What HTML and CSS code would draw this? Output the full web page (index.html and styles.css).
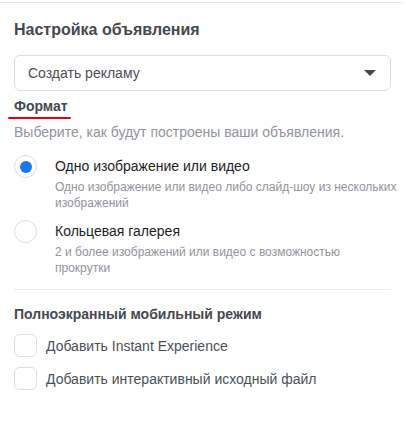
FILE: index.html
```html
<!DOCTYPE html>
<html lang="ru">
<head>
    <meta charset="UTF-8">
    <title>Настройка объявления</title>
    <link rel="stylesheet" href="styles.css">
</head>
<body>
    <div class="card">
        <h2 class="card-title">Настройка объявления</h2>

        <div class="select">
            <span>Создать рекламу</span>
            <span class="select-arrow"></span>
        </div>

        <h3 class="section-title marked">Формат</h3>
        <p class="hint">Выберите, как будут построены ваши объявления.</p>

        <div class="options">
            <div class="option">
                <span class="radio checked"></span>
                <div class="option-text">
                    <div class="option-label">Одно изображение или видео</div>
                    <div class="option-desc">Одно изображение или видео либо слайд-шоу из нескольких изображений</div>
                </div>
            </div>
            <div class="option">
                <span class="radio"></span>
                <div class="option-text">
                    <div class="option-label">Кольцевая галерея</div>
                    <div class="option-desc">2 и более изображений или видео с возможностью<br>прокрутки</div>
                </div>
            </div>
        </div>

        <hr class="divider">

        <h3 class="section-title">Полноэкранный мобильный режим</h3>
        <div class="checks">
            <label class="check"><span class="box"></span>Добавить Instant Experience</label>
            <label class="check"><span class="box"></span>Добавить интерактивный исходный файл</label>
        </div>
    </div>
</body>
</html>
```

FILE: styles.css
```css
body {
    margin: 0;
    padding: 0;
    background: #fff;
    font-family: "Liberation Sans", Arial, sans-serif;
    color: #1c1e21;
}

.card {
    margin-top: 2px;
    margin-right: 2px;
    border-top: 1px solid #e4e6eb;
    border-top-right-radius: 4px;
    padding: 0 13px 0 14px;
}

.card-title {
    margin: 0;
    padding-top: 17px;
    font-size: 16px;
    font-weight: bold;
    color: #444950;
    line-height: 20px;
}

.select {
    margin-top: 15px;
    height: 34px;
    border: 1px solid #dadde1;
    border-radius: 6px;
    display: flex;
    align-items: center;
    justify-content: space-between;
    padding: 0 14px 0 13px;
    font-size: 14px;
    color: #4b4f56;
}

.select-arrow {
    width: 0;
    height: 0;
    border-left: 6px solid transparent;
    border-right: 6px solid transparent;
    border-top: 6px solid #444950;
}

.section-title {
    margin: 0;
    font-size: 14px;
    font-weight: bold;
    color: #444950;
    line-height: 18px;
}

.marked {
    margin-top: 6px;
    display: inline-block;
    position: relative;
}

.marked::after {
    content: "";
    position: absolute;
    left: -6px;
    right: -3px;
    bottom: -4px;
    height: 2px;
    border-radius: 1px;
    background: #e3000f;
}

.hint {
    margin: 8px 0 0;
    font-size: 14px;
    color: #90949c;
    line-height: 18px;
}

.options {
    margin-top: 13px;
    display: flex;
    flex-direction: column;
    gap: 8px;
}

.option {
    display: flex;
    gap: 18px;
}

.radio {
    flex: none;
    box-sizing: border-box;
    width: 23px;
    height: 23px;
    margin-top: 1px;
    border: 1px solid #dadde1;
    border-radius: 50%;
    display: flex;
    align-items: center;
    justify-content: center;
}

.radio.checked::after {
    content: "";
    width: 12px;
    height: 12px;
    border-radius: 50%;
    background: #1877f2;
}

.option-text {
    margin-right: -8px;
}

.option-label {
    font-size: 14px;
    line-height: 24px;
    color: #1c1e21;
}

.option-desc {
    margin-top: 1px;
    font-size: 12px;
    line-height: 16px;
    color: #90949c;
}

.divider {
    margin: 13px 0 15px;
    border: none;
    border-top: 1px solid #e9ebee;
}

.section-title + .checks {
    margin-top: 11px;
}

.checks {
    display: flex;
    flex-direction: column;
    gap: 10px;
}

.check {
    display: flex;
    align-items: center;
    gap: 9px;
    font-size: 14px;
    color: #4b4f56;
}

.box {
    box-sizing: border-box;
    width: 23px;
    height: 23px;
    border: 1px solid #dadde1;
    border-radius: 6px;
}
```
